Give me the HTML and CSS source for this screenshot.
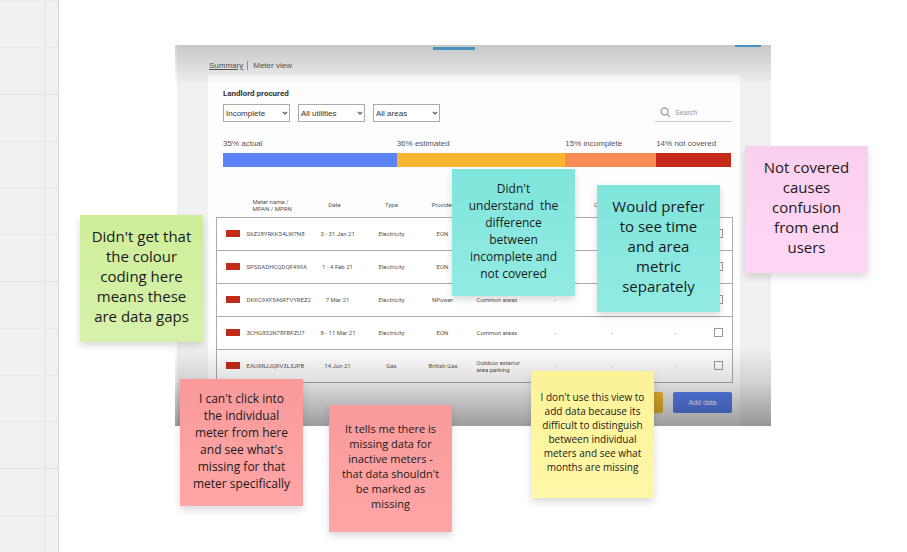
FILE: index.html
```html
<!DOCTYPE html>
<html lang="en">
<head>
  <meta charset="UTF-8">
  <title>Meter view feedback board</title>
  <link rel="stylesheet" href="styles.css">
</head>
<body>

  <main class="board">
    <div class="board-grid"></div>

    <section class="screen">
      <span class="tab-marker tab-main"></span>
      <span class="tab-marker tab-account"></span>

      <nav class="view-links">
        <a href="#summary" class="current">Summary</a>
        <a href="#meters">Meter view</a>
      </nav>

      <div class="panel">
        <h2>Landlord procured</h2>

        <div class="filters">
          <div class="select-box">
            <select aria-label="Status"><option>Incomplete</option></select>
            <svg viewBox="0 0 6 4"><path d="M1 1l2 2 2-2"/></svg>
          </div>
          <div class="select-box">
            <select aria-label="Utility"><option>All utilities</option></select>
            <svg viewBox="0 0 6 4"><path d="M1 1l2 2 2-2"/></svg>
          </div>
          <div class="select-box">
            <select aria-label="Area"><option>All areas</option></select>
            <svg viewBox="0 0 6 4"><path d="M1 1l2 2 2-2"/></svg>
          </div>
          <label class="search">
            <svg viewBox="0 0 12 12"><circle cx="5" cy="5" r="3.8"/><path d="M7.8 7.8l3 3"/></svg>
            <input type="text" placeholder="Search" aria-label="Search">
          </label>
        </div>

        <div class="coverage">
          <span>35% actual</span>
          <span>36% estimated</span>
          <span>15% incomplete</span>
          <span>14% not covered</span>
          <div class="bar actual"></div>
          <div class="bar estimated"></div>
          <div class="bar incomplete"></div>
          <div class="bar not-covered"></div>
        </div>

        <table>
          <colgroup>
            <col class="col-flag">
            <col class="col-name">
            <col class="col-date">
            <col class="col-type">
            <col class="col-provider">
            <col class="col-area">
            <col class="col-value">
            <col class="col-value">
            <col class="col-last">
            <col class="col-check">
          </colgroup>
          <thead>
            <tr>
              <th></th>
              <th class="name">Meter name /<br>MPAN / MPRN</th>
              <th class="date">Date</th>
              <th>Type</th>
              <th>Provider</th>
              <th class="area"></th>
              <th></th>
              <th>Consumption</th>
              <th></th>
              <th></th>
            </tr>
          </thead>
          <tbody>
            <tr>
              <td><span class="flag"></span></td>
              <td class="name">S6Z28YRKK54LW7N8</td>
              <td>3 - 31 Jan 21</td>
              <td>Electricity</td>
              <td>EON</td>
              <td class="area"></td>
              <td></td>
              <td></td>
              <td></td>
              <td><input type="checkbox" aria-label="Select S6Z28YRKK54LW7N8"></td>
            </tr>
            <tr>
              <td><span class="flag"></span></td>
              <td class="name">SPSDADHCQDQF499A</td>
              <td>1 - 4 Feb 21</td>
              <td>Electricity</td>
              <td>EON</td>
              <td class="area"></td>
              <td></td>
              <td></td>
              <td></td>
              <td><input type="checkbox" aria-label="Select SPSDADHCQDQF499A"></td>
            </tr>
            <tr>
              <td><span class="flag"></span></td>
              <td class="name">DKKC9XF546RTVYREZ2</td>
              <td>7 Mar 21</td>
              <td>Electricity</td>
              <td>NPower</td>
              <td class="area">Common areas</td>
              <td>-</td>
              <td></td>
              <td></td>
              <td><input type="checkbox" aria-label="Select DKKC9XF546RTVYREZ2"></td>
            </tr>
            <tr>
              <td><span class="flag"></span></td>
              <td class="name">3CHG832N78FBFZU7</td>
              <td>8 - 11 Mar 21</td>
              <td>Electricity</td>
              <td>EON</td>
              <td class="area">Common areas</td>
              <td>-</td>
              <td>-</td>
              <td>-</td>
              <td><input type="checkbox" aria-label="Select 3CHG832N78FBFZU7"></td>
            </tr>
            <tr>
              <td><span class="flag"></span></td>
              <td class="name">EAUXRJJQRV3L3JPB</td>
              <td>14 Jun 21</td>
              <td>Gas</td>
              <td>British Gas</td>
              <td class="area">Outdoor exterior<br>area parking</td>
              <td>-</td>
              <td>-</td>
              <td>-</td>
              <td><input type="checkbox" aria-label="Select EAUXRJJQRV3L3JPB"></td>
            </tr>
          </tbody>
        </table>

        <div class="actions">
          <button class="export" aria-label="Export data"></button>
          <button class="add">Add data</button>
        </div>
      </div>
    </section>

    <!-- Sticky notes -->
    <div class="note green note-colour">Didn't get that<br>the colour<br>coding here<br>means these<br>are data gaps</div>
    <div class="note teal medium note-difference">Didn't<br>understand&nbsp; the<br>difference<br>between<br>incomplete and<br>not covered</div>
    <div class="note teal note-separate">Would prefer<br>to see time<br>and area<br>metric<br>separately</div>
    <div class="note pink note-covered">Not covered<br>causes<br>confusion<br>from end<br>users</div>
    <div class="note red medium note-click">I can't click into<br>the individual<br>meter from here<br>and see what's<br>missing for that<br>meter specifically</div>
    <div class="note red small note-inactive">It tells me there is<br>missing data for<br>inactive meters -<br>that data shouldn't<br>be marked as<br>missing</div>
    <div class="note yellow tiny note-months">I don't use this view to<br>add data because its<br>difficult to distinguish<br>between individual<br>meters and see what<br>months are missing</div>
  </main>

</body>
</html>
```

FILE: styles.css
```css
:root {
  --grid-bg: #f1f1f1;
  --grid-line: #e9e9e9;
  --grid-line-strong: #e0e0e0;
  --row-line: #ababab;
  --blue: #5b84f7;
  --amber: #fab535;
  --orange: #f98b54;
  --red: #c42a1a;
}

* {
  box-sizing: border-box;
}

body {
  margin: 0;
  background: #fff;
  font-family: "Liberation Sans", Arial, sans-serif;
}

.board {
  position: relative;
  min-height: 100vh;
  overflow: hidden;
}

.board-grid {
  position: absolute;
  top: 0;
  bottom: 0;
  left: 0;
  width: 59px;
  border-right: 1px solid #d8d8d8;
  background-color: var(--grid-bg);
  background-image:
    linear-gradient(var(--grid-line), var(--grid-line)),
    linear-gradient(transparent 1px, var(--grid-line) 1px, var(--grid-line) 2px, transparent 2px,
      transparent 47px, var(--grid-line) 47px, var(--grid-line) 48px, transparent 48px,
      transparent 94px, var(--grid-line-strong) 94px, var(--grid-line-strong) 95px, transparent 95px,
      transparent 141px, var(--grid-line) 141px, var(--grid-line) 142px, transparent 142px);
  background-repeat: no-repeat, repeat-y;
  background-position: 44px 0, 0 0;
  background-size: 2px 100%, 100% 187px;
}

/* Pasted app screen */
.screen {
  position: absolute;
  top: 45px;
  left: 175px;
  width: 596px;
  padding: 16px 31px 0 33px;
  background: linear-gradient(#f1f1f1, #f1f1f1) 2px 0 no-repeat;
}

.screen::after {
  content: "";
  position: absolute;
  inset: 0;
  pointer-events: none;
  background:
    linear-gradient(rgba(50, 52, 56, 0.22), rgba(50, 52, 56, 0.13) 18px, rgba(50, 52, 56, 0) 40px) no-repeat,
    linear-gradient(to top, rgba(0, 0, 0, 0.38), rgba(0, 0, 0, 0.13) 44px, rgba(0, 0, 0, 0) 80px) no-repeat;
}

.tab-marker {
  position: absolute;
  background: #50ace2;
}

.tab-main {
  top: 2px;
  left: 258px;
  width: 42px;
  height: 3px;
}

.tab-account {
  top: 0;
  left: 560px;
  width: 26px;
  height: 2px;
}

.view-links {
  display: flex;
  height: 14px;
  font-size: 8px;
  line-height: 10px;
}

.view-links a {
  padding: 0 4px 0 1px;
  color: #555;
  text-decoration: none;
}

.view-links a + a {
  height: 9px;
  padding-left: 5px;
  border-left: 1px solid #999;
}

.view-links .current {
  text-decoration: underline;
}

.panel {
  padding: 14px 8px 13px;
  background: #fdfdfd;
}

.panel h2 {
  margin: 0 7px 5px;
  font-family: Roboto, sans-serif;
  font-size: 8px;
  line-height: 10px;
  color: #333;
}

.filters {
  display: flex;
  gap: 8px;
  margin: 0 0 0 7px;
}

.select-box {
  position: relative;
  width: 67px;
}

.select-box select {
  display: block;
  width: 100%;
  height: 18px;
  padding: 0 2px;
  border: 1px solid #aaa;
  border-radius: 0;
  background: #fff;
  appearance: none;
  font: 8px "Liberation Sans", Arial, sans-serif;
  color: #333;
}

.select-box svg {
  position: absolute;
  top: 7px;
  right: 2px;
  width: 6px;
  height: 4px;
  fill: none;
  stroke: #555;
  stroke-width: 1.2;
}

.search {
  display: flex;
  align-items: center;
  gap: 4px;
  width: 77px;
  height: 18px;
  margin-left: auto;
  padding: 0 5px;
  border-bottom: 1px solid #ccc;
}

.search svg {
  flex: none;
  width: 11px;
  height: 11px;
  fill: none;
  stroke: #aaa;
  stroke-width: 1.6;
}

.search input {
  width: 100%;
  min-width: 0;
  padding: 0;
  border: none;
  background: none;
  font: 7px "Liberation Sans", Arial, sans-serif;
}

.search input::placeholder {
  color: #999;
}

.coverage {
  display: grid;
  grid-template-columns: 174fr 169fr 91fr 75fr;
  row-gap: 4px;
  margin: 17px 1px 29px 7px;
  font-size: 8px;
  line-height: 10px;
  color: #555;
}

.bar {
  height: 14px;
}

.actual {
  background: var(--blue);
}

.estimated {
  background: var(--amber);
}

.incomplete {
  background: var(--orange);
}

.not-covered {
  background: var(--red);
}

table {
  width: 100%;
  table-layout: fixed;
  border-collapse: collapse;
  font-family: Roboto, sans-serif;
  font-size: 6px;
  line-height: 7px;
  color: #555;
  white-space: nowrap;
}

.col-flag { width: 30px; }
.col-name { width: 74px; }
.col-date { width: 34px; }
.col-type { width: 74px; }
.col-provider { width: 28px; }
.col-area { width: 70px; }
.col-value { width: 57px; }
.col-last { width: 69px; }
.col-check { width: 23px; }

th,
td {
  padding: 0;
  text-align: center;
}

th {
  height: 21px;
  padding-bottom: 3px;
  font-weight: normal;
}

tbody tr {
  height: 33px;
  border: 1px solid var(--row-line);
  background: #fff;
}

.name {
  text-align: left;
}

th.name {
  padding-left: 6px;
}

th.date {
  padding-right: 6px;
}

.area {
  padding-left: 20px;
  text-align: left;
}

.flag {
  display: block;
  width: 14px;
  height: 7px;
  margin-left: 9px;
  background: var(--red);
}

td input {
  display: block;
  width: 9px;
  height: 9px;
  margin: 0 0 0 4px;
  border: 1px solid #999;
  background: #fff;
  appearance: none;
}

.actions {
  display: flex;
  justify-content: flex-end;
  gap: 10px;
  margin-top: 9px;
}

.actions button {
  width: 59px;
  height: 21px;
  padding: 0;
  border: none;
  border-radius: 2px;
  font: 7px "Liberation Sans", Arial, sans-serif;
}

.export {
  background: #fcc531;
}

.add {
  background: #5b84f7;
  color: #fff;
}

/* Notes */
.note {
  position: absolute;
  display: flex;
  align-items: center;
  justify-content: center;
  width: 123px;
  height: 127px;
  padding-bottom: 5px;
  box-shadow: 0 4px 7px rgba(0, 0, 0, 0.14);
  font-family: "Open Sans", sans-serif;
  font-size: 15px;
  line-height: 20px;
  text-align: center;
  white-space: nowrap;
  color: #1a1a1a;
}

.medium {
  padding-bottom: 3px;
  font-size: 12px;
  line-height: 17px;
}

.small {
  font-size: 11px;
  line-height: 15px;
}

.tiny {
  font-size: 10px;
  line-height: 14px;
}

.green {
  background: linear-gradient(#cfee99, #d7f1ab);
}

.teal {
  background: linear-gradient(#7fe5dc, #92ebe2);
}

.pink {
  background: linear-gradient(#fbcfee, #ffd7f4);
}

.red {
  background: linear-gradient(#fa9a9a, #ffa6a6);
}

.yellow {
  background: linear-gradient(#fcf397, #fff6a8);
}

.note-colour { top: 215px; left: 80px; }
.note-difference { top: 169px; left: 452px; }
.note-separate { top: 185px; left: 597px; }
.note-covered { top: 146px; left: 745px; }
.note-click { top: 379px; left: 180px; }
.note-inactive { top: 405px; left: 329px; }
.note-months { top: 371px; left: 531px; }
```
